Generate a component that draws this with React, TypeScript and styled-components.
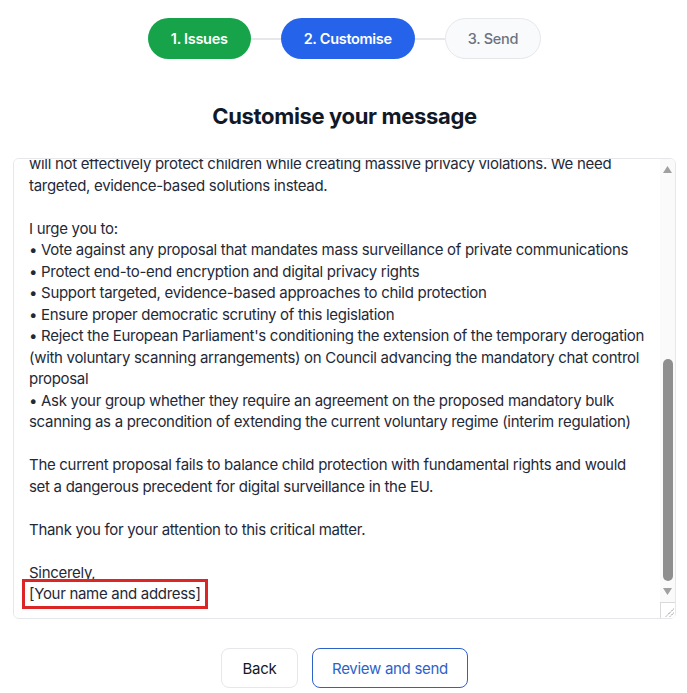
import React, { useLayoutEffect, useRef } from "react";
import styled, { createGlobalStyle } from "styled-components";

const Global = createGlobalStyle`
  html, body { margin: 0; padding: 0; background: #ffffff; }
  body { font-family: Inter, "Noto Sans", "Liberation Sans", sans-serif; color: #111827; }
  * { box-sizing: border-box; }
`;

const Page = styled.div`
  display: flex;
  flex-direction: column;
  align-items: stretch;
  padding: 18px 11px 0 13px;
`;

const Steps = styled.div`
  display: flex;
  justify-content: center;
  align-items: center;
`;

const Connector = styled.div`
  width: 30px;
  height: 2px;
  background: #e5e7eb;
`;

const Pill = styled.div<{ $state: "done" | "active" | "todo" }>`
  height: 41px;
  padding: 0 22px;
  border-radius: 999px;
  display: flex;
  align-items: center;
  font-size: 14.5px;
  letter-spacing: -0.3px;
  font-weight: ${(p) => (p.$state === "todo" ? 500 : 600)};
  background: ${(p) =>
    p.$state === "done" ? "#16a34a" : p.$state === "active" ? "#2563eb" : "#f9fafb"};
  color: ${(p) => (p.$state === "todo" ? "#6b7280" : "#ffffff")};
  border: 1px solid ${(p) => (p.$state === "todo" ? "#e5e7eb" : "transparent")};
`;

const Heading = styled.h1`
  margin: 43px 0 0;
  text-align: center;
  font-size: 22px;
  line-height: 28px;
  letter-spacing: -0.35px;
  font-weight: 700;
  color: #111827;
`;

const EditorWrap = styled.div`
  position: relative;
  margin-top: 28px;
`;

const Letter = styled.textarea`
  display: block;
  width: 100%;
  height: 461px;
  padding: 12px 30px 13px 15px;
  border: 1px solid #e5e7eb;
  border-radius: 6px;
  font-family: Inter, "Noto Sans", "Liberation Sans", sans-serif;
  font-size: 15px;
  line-height: 21.5px;
  letter-spacing: -0.3px;
  color: #1f2937;
  background: #ffffff;
  resize: vertical;
  outline: none;
`;

/* drawing of the classic scrollbar that the textarea shows in the reference */
const ScrollBar = styled.div`
  position: absolute;
  top: 1px;
  right: 1px;
  bottom: 1px;
  width: 15px;
  display: flex;
  flex-direction: column;
  background: #fafafa;
  pointer-events: none;
  border-top-right-radius: 5px;
`;

const ArrowButton = styled.div`
  height: 21px;
  display: flex;
  align-items: center;
  justify-content: center;
  flex: none;
`;

const Track = styled.div`
  flex: 1;
  display: flex;
  flex-direction: column;
  justify-content: flex-end;
  align-items: center;
`;

const Thumb = styled.div`
  width: 10px;
  height: 222px;
  margin-bottom: 0;
  border-radius: 5px;
  background: #8f8f8f;
`;

const Corner = styled.div`
  height: 16px;
  flex: none;
  background: #ffffff;
  border-top: 1px solid #d9d9d9;
  border-left: 1px solid #d9d9d9;
  display: flex;
  align-items: flex-end;
  justify-content: flex-end;
  border-bottom-right-radius: 5px;
`;

const Highlight = styled.div`
  position: absolute;
  left: 9px;
  top: 421px;
  width: 186px;
  height: 30px;
  border: 3px solid #dc2626;
  pointer-events: none;
`;

const Actions = styled.div`
  display: flex;
  justify-content: center;
  gap: 14px;
  margin-top: 29px;
`;

const Button = styled.button<{ $primary?: boolean }>`
  height: 40px;
  width: ${(p) => (p.$primary ? "156px" : "77px")};
  padding: 0;
  border-radius: 8px;
  font-family: Inter, "Noto Sans", "Liberation Sans", sans-serif;
  font-size: 15px;
  letter-spacing: -0.3px;
  background: #ffffff;
  border: 1px solid ${(p) => (p.$primary ? "#2d62c9" : "#e5e7eb")};
  color: ${(p) => (p.$primary ? "#2d62c9" : "#111827")};
`;

const letter = `Dear Member of the European Parliament,

I am writing to you as a concerned citizen regarding the proposed Regulation to Prevent and Combat Child Sexual Abuse, commonly known as "Chat Control".

While I fully support the goal of protecting children, I am deeply concerned that the current proposal would undermine the fundamental rights of all EU citizens, including the right to privacy and the confidentiality of communications.

The proposal would require the scanning of private messages, including those protected by end-to-end encryption. This would create security vulnerabilities that could be exploited by criminals and hostile states.

Experts, including the European Data Protection Supervisor, have warned that such mass surveillance is incompatible with the EU Charter of Fundamental Rights. The proposal as it stands
will not effectively protect children while creating massive privacy violations. We need targeted, evidence-based solutions instead.

I urge you to:
• Vote against any proposal that mandates mass surveillance of private communications
• Protect end-to-end encryption and digital privacy rights
• Support targeted, evidence-based approaches to child protection
• Ensure proper democratic scrutiny of this legislation
• Reject the European Parliament's conditioning the extension of the temporary derogation (with voluntary scanning arrangements) on Council advancing the mandatory chat control proposal
• Ask your group whether they require an agreement on the proposed mandatory bulk scanning as a precondition of extending the current voluntary regime (interim regulation)

The current proposal fails to balance child protection with fundamental rights and would set a dangerous precedent for digital surveillance in the EU.

Thank you for your attention to this critical matter.

Sincerely,
[Your name and address]`;

export default function App() {
  const ref = useRef<HTMLTextAreaElement>(null);
  useLayoutEffect(() => {
    const el = ref.current;
    if (el) el.scrollTop = el.scrollHeight;
  }, []);
  return (
    <>
      <Global />
      <Page>
        <Steps>
          <Pill $state="done">1. Issues</Pill>
          <Connector />
          <Pill $state="active">2. Customise</Pill>
          <Connector />
          <Pill $state="todo">3. Send</Pill>
        </Steps>
        <Heading>Customise your message</Heading>
        <EditorWrap>
          <Letter ref={ref} defaultValue={letter} spellCheck={false} />
          <ScrollBar aria-hidden>
            <ArrowButton>
              <svg width="9" height="7" viewBox="0 0 9 7">
                <polygon points="4.5,0 9,7 0,7" fill="#a0a0a0" />
              </svg>
            </ArrowButton>
            <Track>
              <Thumb />
            </Track>
            <ArrowButton>
              <svg width="9" height="7" viewBox="0 0 9 7">
                <polygon points="0,0 9,0 4.5,7" fill="#a0a0a0" />
              </svg>
            </ArrowButton>
            <Corner>
              <svg width="14" height="14" viewBox="0 0 14 14">
                <line x1="12.5" y1="5" x2="5" y2="12.5" stroke="#555" strokeWidth="1" strokeDasharray="1 1" />
                <line x1="12.5" y1="9" x2="9" y2="12.5" stroke="#555" strokeWidth="1" strokeDasharray="1 1" />
              </svg>
            </Corner>
          </ScrollBar>
          <Highlight />
        </EditorWrap>
        <Actions>
          <Button>Back</Button>
          <Button $primary>Review and send</Button>
        </Actions>
      </Page>
    </>
  );
}
